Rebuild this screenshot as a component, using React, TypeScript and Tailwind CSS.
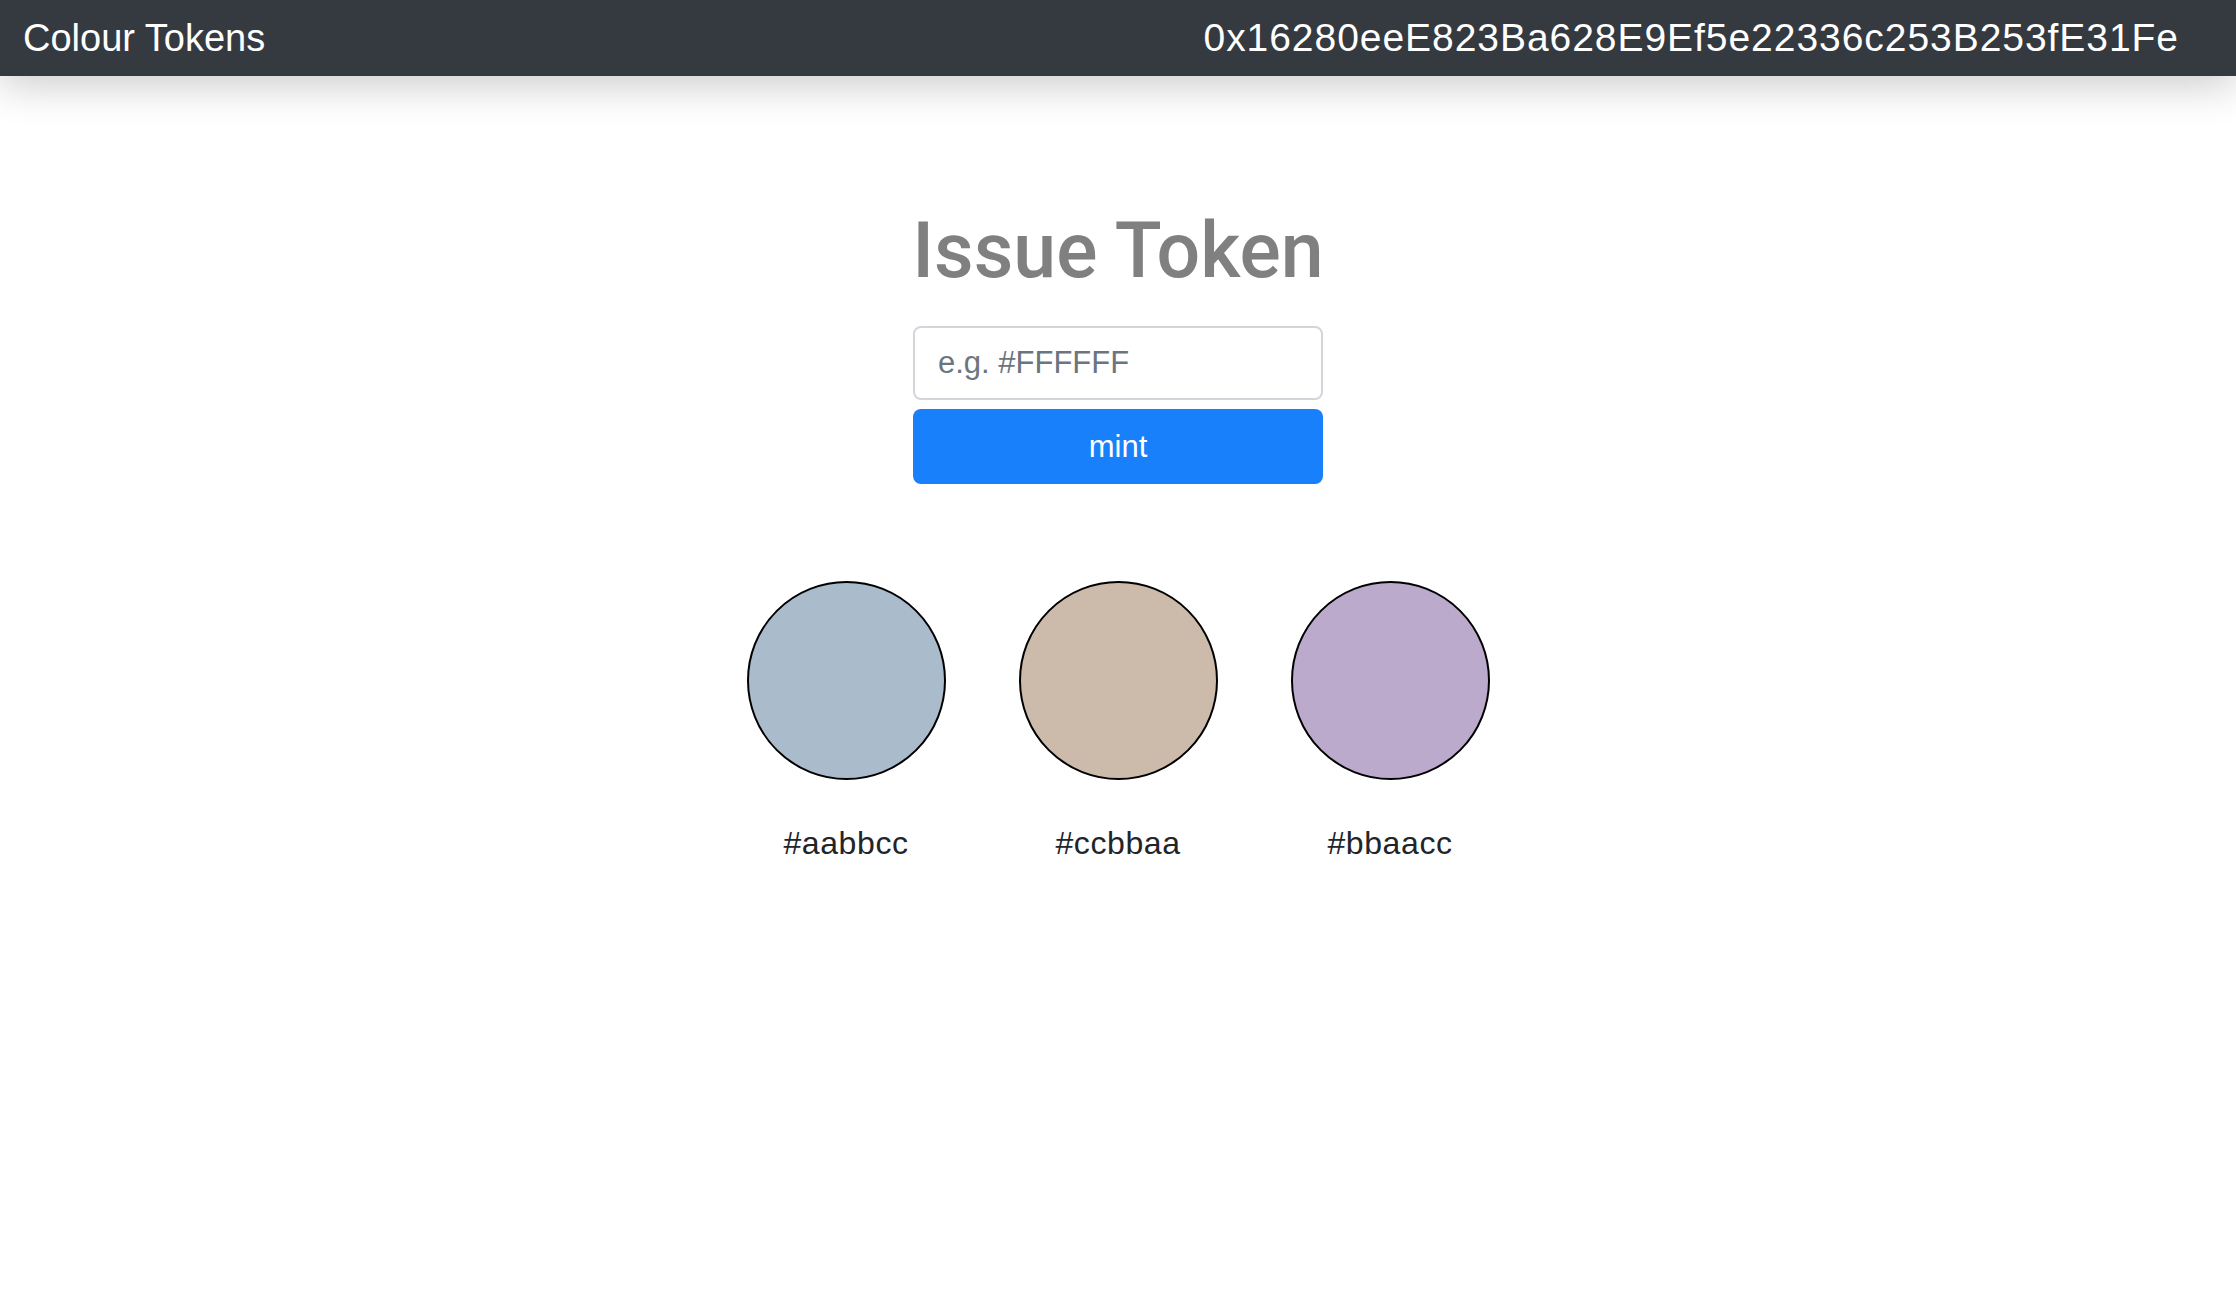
import React from "react";

const swatches = ["#aabbcc", "#ccbbaa", "#bbaacc"];

export default function App() {
  return (
    <div className="min-h-[1310px] bg-white font-['Liberation_Sans',Arial,sans-serif]">
      <nav className="relative z-10 flex h-[76px] items-center justify-between bg-[#343a40] pl-[23px] pr-[57px] text-white shadow-[0_10px_40px_rgba(0,0,0,0.2)]">
        <span className="text-[38px] leading-[58px]">Colour Tokens</span>
        <span className="text-[39px] leading-[58px] tracking-[0.95px]">
          0x16280eeE823Ba628E9Ef5e22336c253B253fE31Fe
        </span>
      </nav>
      <main className="flex flex-col items-center pt-[129px]">
        <h1 className="font-['Roboto',sans-serif] text-[77px] font-medium leading-[1.2] text-[#808080]">
          Issue Token
        </h1>
        <div className="mt-[29px] flex w-[410px] flex-col gap-[9px]">
          <input
            type="text"
            placeholder="e.g. #FFFFFF"
            className="h-[74px] w-full rounded-[8px] border-2 border-[#d2d6db] bg-white px-[23px] text-[31px] text-[#495057] outline-none placeholder:text-[#6c757d]"
          />
          <button className="h-[75px] w-full rounded-[8px] bg-[#1880fb] text-[31px] text-white">
            mint
          </button>
        </div>
        <div className="mt-[97px] flex">
          {swatches.map((c) => (
            <div key={c} className="flex w-[272px] flex-col items-center">
              <div
                className="h-[199px] w-[199px] rounded-full border-2 border-black"
                style={{ backgroundColor: c }}
              />
              <div className="mt-[39px] text-[32px] leading-[1.5] tracking-[0.6px] text-[#212529]">{c}</div>
            </div>
          ))}
        </div>
      </main>
    </div>
  );
}
